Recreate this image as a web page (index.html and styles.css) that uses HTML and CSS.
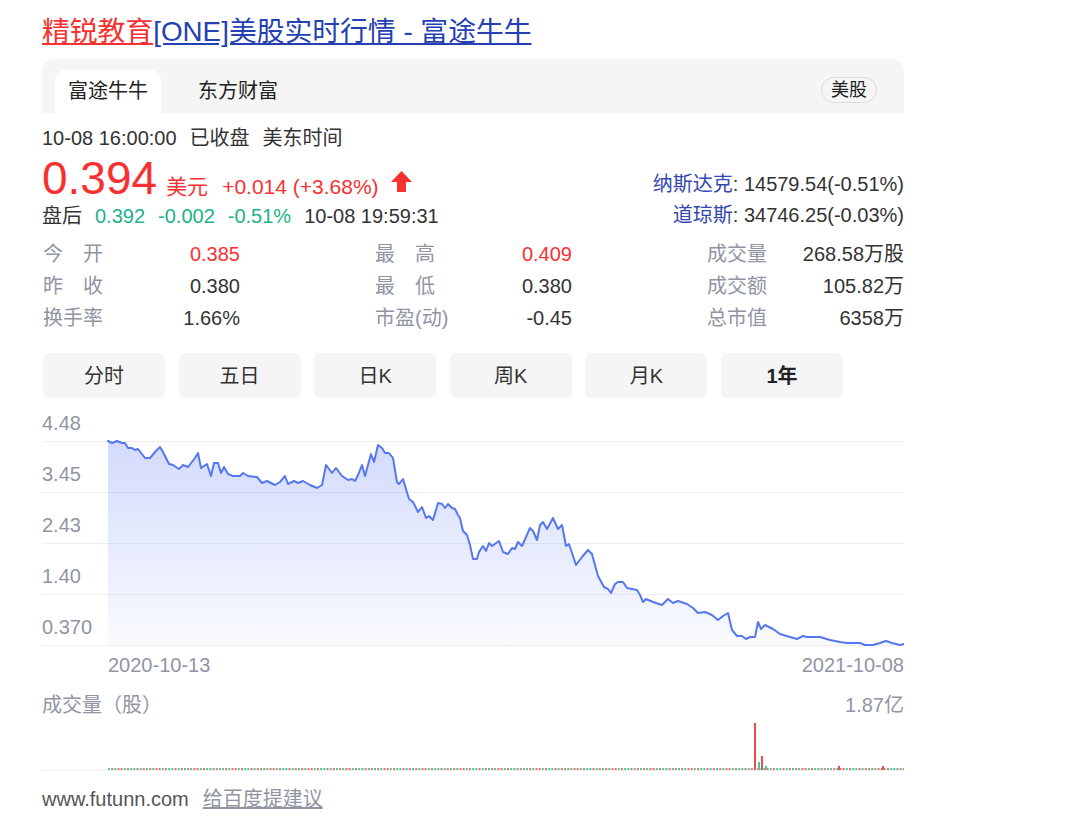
FILE: index.html
```html
<!DOCTYPE html>
<html lang="zh-CN">
<head>
<meta charset="utf-8">
<title>精锐教育[ONE]美股实时行情 - 富途牛牛</title>
<link rel="stylesheet" href="styles.css">
</head>
<body>
<div class="card">
  <h3 class="title"><a href="#"><span class="t-red">精锐教育</span><span class="t-blue">[ONE]美股实时行情 - 富途牛牛</span></a></h3>

  <div class="tabs">
    <div class="tab active">富途牛牛</div>
    <div class="tab">东方财富</div>
    <div class="market">美股</div>
  </div>

  <div class="quote">
    <div class="q-left">
      <div class="status"><span>10-08 16:00:00</span><span class="sp">已收盘</span><span class="sp">美东时间</span></div>
      <div class="price-row">
        <span class="price">0.394</span>
        <span class="unit">美元</span>
        <span class="chg">+0.014 (+3.68%)</span>
        <svg class="arrow" width="21" height="21" viewBox="0 0 21 21"><polygon points="10.5,0 21,11 15,11 15,21 6,21 6,11 0,11" fill="#f73131"/></svg>
      </div>
      <div class="after"><span>盘后</span><span class="sp green">0.392</span><span class="sp green">-0.002</span><span class="sp green">-0.51%</span><span class="sp">10-08 19:59:31</span></div>
    </div>
    <div class="q-right">
      <div class="idx"><span class="idx-name">纳斯达克</span>: 14579.54(-0.51%)</div>
      <div class="idx"><span class="idx-name">道琼斯</span>: 34746.25(-0.03%)</div>
    </div>
  </div>

  <div class="stats">
    <div class="stat"><span class="k">今　开</span><span class="v red">0.385</span></div>
    <div class="stat"><span class="k">最　高</span><span class="v red">0.409</span></div>
    <div class="stat"><span class="k">成交量</span><span class="v">268.58万股</span></div>
    <div class="stat"><span class="k">昨　收</span><span class="v">0.380</span></div>
    <div class="stat"><span class="k">最　低</span><span class="v">0.380</span></div>
    <div class="stat"><span class="k">成交额</span><span class="v">105.82万</span></div>
    <div class="stat"><span class="k">换手率</span><span class="v">1.66%</span></div>
    <div class="stat"><span class="k">市盈(动)</span><span class="v">-0.45</span></div>
    <div class="stat"><span class="k">总市值</span><span class="v">6358万</span></div>
  </div>

  <div class="periods">
    <div class="period">分时</div>
    <div class="period">五日</div>
    <div class="period">日K</div>
    <div class="period">周K</div>
    <div class="period">月K</div>
    <div class="period active">1年</div>
  </div>

  <svg class="chart" viewBox="42 405 862 245" width="862" height="245">
    <defs>
      <linearGradient id="fillg" x1="0" y1="441" x2="0" y2="645" gradientUnits="userSpaceOnUse">
        <stop offset="0" stop-color="#4e6ef2" stop-opacity="0.25"/>
        <stop offset="1" stop-color="#4e6ef2" stop-opacity="0.03"/>
      </linearGradient>
    </defs>
    <g stroke="#eeeeee" stroke-width="1">
      <line x1="42" y1="441.5" x2="904" y2="441.5"/>
      <line x1="42" y1="492.5" x2="904" y2="492.5"/>
      <line x1="42" y1="543.5" x2="904" y2="543.5"/>
      <line x1="42" y1="594.5" x2="904" y2="594.5"/>
      <line x1="42" y1="645.5" x2="904" y2="645.5"/>
    </g>
    <g class="ylab">
      <text x="42" y="430">4.48</text>
      <text x="42" y="481">3.45</text>
      <text x="42" y="532">2.43</text>
      <text x="42" y="583">1.40</text>
      <text x="42" y="634">0.370</text>
    </g>
    <polygon fill="url(#fillg)" points="108,441 112,443 117,441 122,443 125,443 128,448 132,448 135,450 138,449 145,458 150,458 155,452 160,447 163,452 169,464 173,465 179,469 183,465 188,467 195,458 198,453 201,468 207,464 211,476 214,463 218,463 221,473 224,467 228,474 233,476 240,476 243,473 248,476 257,477 262,483 267,481 275,485 280,482 285,476 288,484 294,481 298,483 303,481 310,485 317,488 322,485 326,465 332,473 336,468 342,476 348,480 352,479 355,481 358,475 362,465 365,476 371,454 374,462 378,445 382,448 385,453 389,453 393,458 397,482 399,484 403,479 409,499 413,502 418,512 422,507 426,518 429,516 433,520 438,503 442,504 445,508 448,504 452,508 455,509 458,515 460,518 463,531 467,535 470,545 473,559 477,559 479,552 483,546 486,551 489,543 492,546 499,541 503,552 508,554 512,548 515,549 518,542 522,546 530,528 533,531 537,540 540,525 543,522 547,529 553,518 558,529 562,525 566,546 569,544 576,565 582,557 588,550 592,554 598,576 604,587 608,589 611,593 615,584 618,582 623,582 627,588 632,589 637,590 640,595 643,602 646,599 653,602 662,605 668,599 673,603 678,601 687,604 693,608 698,613 705,612 712,615 718,620 723,616 728,613 732,630 737,636 742,636 746,639 750,637 755,637 758,622 761,629 765,625 773,629 780,634 790,637 797,639 803,636 807,637 820,637 830,640 840,642 847,643 860,643 865,645 873,645 880,643 886,641 892,643 900,645 904,644 904,645 108,645"/>
    <polyline fill="none" stroke="#5677f0" stroke-width="2" stroke-linejoin="round" stroke-linecap="round" points="108,441 112,443 117,441 122,443 125,443 128,448 132,448 135,450 138,449 145,458 150,458 155,452 160,447 163,452 169,464 173,465 179,469 183,465 188,467 195,458 198,453 201,468 207,464 211,476 214,463 218,463 221,473 224,467 228,474 233,476 240,476 243,473 248,476 257,477 262,483 267,481 275,485 280,482 285,476 288,484 294,481 298,483 303,481 310,485 317,488 322,485 326,465 332,473 336,468 342,476 348,480 352,479 355,481 358,475 362,465 365,476 371,454 374,462 378,445 382,448 385,453 389,453 393,458 397,482 399,484 403,479 409,499 413,502 418,512 422,507 426,518 429,516 433,520 438,503 442,504 445,508 448,504 452,508 455,509 458,515 460,518 463,531 467,535 470,545 473,559 477,559 479,552 483,546 486,551 489,543 492,546 499,541 503,552 508,554 512,548 515,549 518,542 522,546 530,528 533,531 537,540 540,525 543,522 547,529 553,518 558,529 562,525 566,546 569,544 576,565 582,557 588,550 592,554 598,576 604,587 608,589 611,593 615,584 618,582 623,582 627,588 632,589 637,590 640,595 643,602 646,599 653,602 662,605 668,599 673,603 678,601 687,604 693,608 698,613 705,612 712,615 718,620 723,616 728,613 732,630 737,636 742,636 746,639 750,637 755,637 758,622 761,629 765,625 773,629 780,634 790,637 797,639 803,636 807,637 820,637 830,640 840,642 847,643 860,643 865,645 873,645 880,643 886,641 892,643 900,645 904,644"/>
  </svg>

  <div class="xaxis"><span>2020-10-13</span><span>2021-10-08</span></div>

  <div class="vol-head"><span>成交量（股）</span><span>1.87亿</span></div>

  <svg class="vol" viewBox="42 717 862 60" width="862" height="60">
    <defs>
      <pattern id="vp" x="108" y="768" width="38" height="2" patternUnits="userSpaceOnUse">
        <rect x="0" y="0" width="2" height="2" fill="#3ccfa5"/>
        <rect x="3.17" y="0" width="2" height="2" fill="#f26d6d"/>
        <rect x="6.33" y="0" width="2" height="2" fill="#3ccfa5"/>
        <rect x="9.5" y="0" width="2" height="2" fill="#f26d6d"/>
        <rect x="12.67" y="0" width="2" height="2" fill="#f26d6d"/>
        <rect x="15.83" y="0" width="2" height="2" fill="#3ccfa5"/>
        <rect x="19" y="0" width="2" height="2" fill="#f26d6d"/>
        <rect x="22.17" y="0" width="2" height="2" fill="#3ccfa5"/>
        <rect x="25.33" y="0" width="2" height="2" fill="#3ccfa5"/>
        <rect x="28.5" y="0" width="2" height="2" fill="#f26d6d"/>
        <rect x="31.67" y="0" width="2" height="2" fill="#3ccfa5"/>
        <rect x="34.83" y="0" width="2" height="2" fill="#f26d6d"/>
      </pattern>
    </defs>
    <line x1="42" y1="770.5" x2="904" y2="770.5" stroke="#eeeeee"/>
    <rect x="108" y="768" width="796" height="2" fill="url(#vp)"/>
    <rect x="754" y="723" width="2" height="47" fill="#f24b4b"/>
    <rect x="758" y="762" width="2" height="8" fill="#3ccfa5"/>
    <rect x="761" y="756" width="2" height="14" fill="#f24b4b"/>
    <rect x="765" y="766" width="2" height="4" fill="#3ccfa5"/>
    <rect x="838" y="766" width="2" height="4" fill="#f24b4b"/>
    <rect x="882" y="766" width="2" height="4" fill="#f24b4b"/>
  </svg>

  <div class="foot"><span class="site">www.futunn.com</span><a class="advice" href="#">给百度提建议</a></div>
</div>
</body>
</html>
```

FILE: styles.css
```css
* { box-sizing: border-box; }
html, body { margin: 0; background: #fff; }
body {
  font-family: "Liberation Sans", "Noto Sans CJK SC", sans-serif;
  font-size: 20px;
  color: #333;
}
.card { width: 862px; margin-left: 42px; padding-top: 14px; }

.title { margin: 0; font-size: 27.8px; line-height: 36px; font-weight: normal; white-space: nowrap; }
.title a { text-decoration: none; }
.t-red { color: #f73131; text-decoration: underline; }
.t-blue { color: #2440b3; text-decoration: underline; }

.tabs {
  display: flex; align-items: flex-end;
  height: 54px; margin-top: 9px;
  padding: 0 27px 0 13px;
  background: #f5f5f6;
  border-radius: 12px 12px 0 0;
}
.tab { height: 43px; line-height: 43px; padding: 0 13px; color: #222; }
.tab.active { background: #fff; border-radius: 10px 10px 0 0; }
.tab + .tab { margin-left: 24px; }
.market {
  margin-left: auto; margin-bottom: 10px;
  height: 26px; line-height: 24px; padding: 0 9px;
  border: 1px solid #d9dbe0; border-radius: 13px;
  font-size: 18px; color: #222;
}

.quote { display: flex; justify-content: space-between; align-items: flex-end; margin-top: 10px; }
.status, .after { line-height: 30px; white-space: nowrap; }
.sp { margin-left: 13px; }
.green { color: #1bb38a; }
.red { color: #f73131; }
.price-row { display: flex; align-items: baseline; height: 46px; margin-top: 2px; color: #f73131; white-space: nowrap; }
.price { font-size: 46px; line-height: 46px; }
.unit { margin-left: 9px; font-size: 21px; }
.chg { margin-left: 14px; font-size: 21px; }
.arrow { margin-left: 12px; align-self: center; margin-top: 7px; }
.q-right { text-align: right; }
.idx { line-height: 31px; white-space: nowrap; }
.idx-name { color: #3347b0; }

.stats {
  display: grid; grid-template-columns: repeat(3, 197px);
  justify-content: space-between;
  margin-top: 7px; padding-left: 1px;
}
.stat { display: flex; justify-content: space-between; line-height: 32px; }
.k { color: #9195a3; }

.periods { display: grid; grid-template-columns: repeat(6, 122px); column-gap: 13.6px; margin-top: 19px; padding-left: 1px; }
.period { height: 45px; line-height: 47px; text-align: center; background: #f5f5f6; border-radius: 6px; color: #333; }
.period.active { font-weight: bold; color: #222; }

.chart { display: block; margin-top: 7px; }
.chart text { font-family: "Liberation Sans", sans-serif; font-size: 20px; fill: #9195a3; }

.xaxis { display: flex; justify-content: space-between; padding-left: 66px; margin-top: 3px; line-height: 24px; color: #9195a3; }
.vol-head { display: flex; justify-content: space-between; margin-top: 16px; line-height: 24px; color: #9195a3; }
.vol { display: block; }

.foot { margin-top: 10px; line-height: 24px; }
.site { color: #555; }
.advice { margin-left: 14px; color: #9195a3; text-decoration: underline; }
```
